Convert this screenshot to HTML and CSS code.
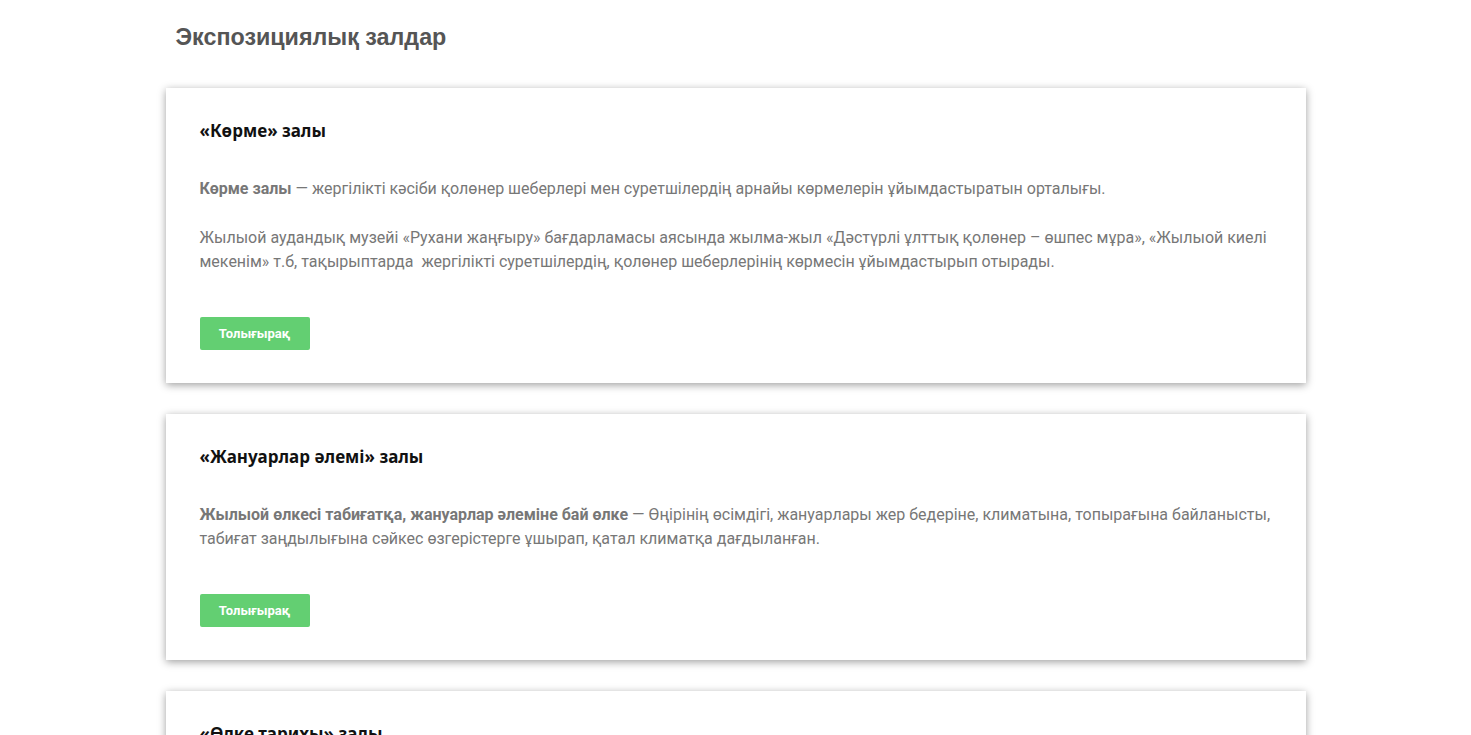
FILE: index.html
```html
<!DOCTYPE html>
<html lang="kk">
<head>
    <meta charset="UTF-8">
    <meta name="viewport" content="width=device-width, initial-scale=1.0">
    <title>Экспозициялық залдар</title>
    <link rel="stylesheet" href="styles.css">
</head>
<body>
    <div class="container">
        <h1>Экспозициялық залдар</h1>

        <div class="hall">
            <h2>«Көрме» залы</h2>
            <p><strong>Көрме залы</strong> — жергілікті кәсіби қолөнер шеберлері мен суретшілердің арнайы көрмелерін ұйымдастыратын орталығы.</p>
            <p>Жылыой аудандық музейі «Рухани жаңғыру» бағдарламасы аясында жылма-жыл «Дәстүрлі ұлттық қолөнер – өшпес мұра», «Жылыой киелі мекенім» т.б, тақырыптарда &nbsp;жергілікті суретшілердің, қолөнер шеберлерінің көрмесін ұйымдастырып отырады.</p>
            <a class="more" href="#">Толығырақ</a>
        </div>

        <div class="hall">
            <h2>«Жануарлар әлемі» залы</h2>
            <p><strong>Жылыой өлкесі табиғатқа, жануарлар әлеміне бай өлке</strong> — Өңірінің өсімдігі, жануарлары жер бедеріне, климатына, топырағына байланысты, табиғат заңдылығына сәйкес өзгерістерге ұшырап, қатал климатқа дағдыланған.</p>
            <a class="more" href="#">Толығырақ</a>
        </div>

        <div class="hall">
            <h2>«Өлке тарихы» залы</h2>
            <p>Өлке тарихы залы.</p>
            <a class="more" href="#">Толығырақ</a>
        </div>
    </div>
</body>
</html>
```

FILE: styles.css
```css
body {
    margin: 0;
    background-color: #fff;
    font-family: Roboto, "Noto Sans", sans-serif;
}

.container {
    width: 1140px;
    margin: 0 auto;
    padding-top: 22px;
}

h1 {
    margin: 0 0 36px 10px;
    font-family: "Liberation Sans", Arial, sans-serif;
    font-size: 23.3px;
    font-weight: bold;
    color: #555;
    line-height: 30px;
}

.hall {
    background-color: white;
    padding: 31px 34px 33px;
    margin-bottom: 31px;
    box-shadow: 0 2px 8px rgba(0, 0, 0, 0.38);
}

h2 {
    margin: 0 0 34px;
    font-family: "Noto Sans", "DejaVu Sans", sans-serif;
    font-size: 17px;
    font-weight: bold;
    color: #111;
    line-height: 24px;
}

p {
    margin: 0 0 25px;
    font-size: 16px;
    line-height: 24px;
    color: #777;
}

p strong {
    color: #777;
}

.more {
    display: inline-block;
    margin-top: 18px;
    width: 110px;
    height: 33px;
    line-height: 33px;
    text-align: center;
    background-color: #63cf72;
    color: white;
    font-size: 13px;
    font-weight: bold;
    text-decoration: none;
    border-radius: 2px;
}
```
